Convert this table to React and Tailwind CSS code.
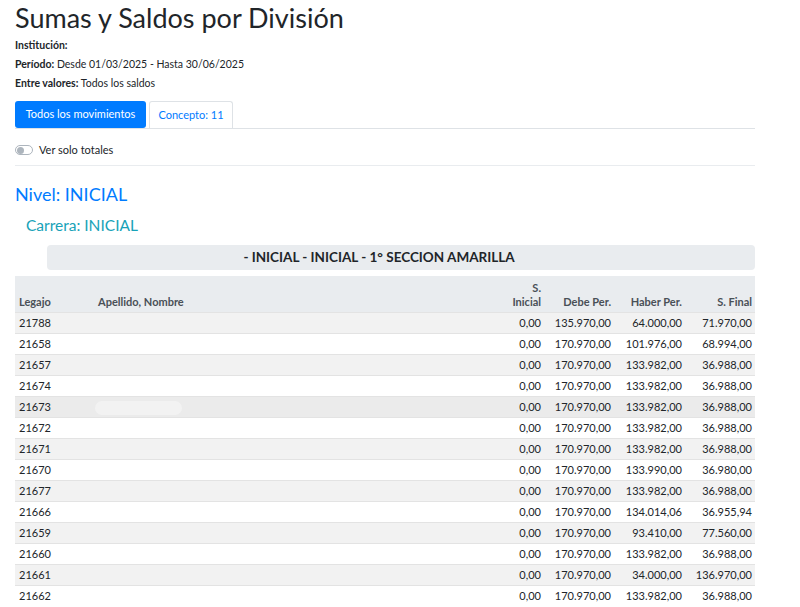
import React from "react";

const rows = [
  ["21788", "0,00", "135.970,00", "64.000,00", "71.970,00"],
  ["21658", "0,00", "170.970,00", "101.976,00", "68.994,00"],
  ["21657", "0,00", "170.970,00", "133.982,00", "36.988,00"],
  ["21674", "0,00", "170.970,00", "133.982,00", "36.988,00"],
  ["21673", "0,00", "170.970,00", "133.982,00", "36.988,00"],
  ["21672", "0,00", "170.970,00", "133.982,00", "36.988,00"],
  ["21671", "0,00", "170.970,00", "133.982,00", "36.988,00"],
  ["21670", "0,00", "170.970,00", "133.990,00", "36.980,00"],
  ["21677", "0,00", "170.970,00", "133.982,00", "36.988,00"],
  ["21666", "0,00", "170.970,00", "134.014,06", "36.955,94"],
  ["21659", "0,00", "170.970,00", "93.410,00", "77.560,00"],
  ["21660", "0,00", "170.970,00", "133.982,00", "36.988,00"],
  ["21661", "0,00", "170.970,00", "34.000,00", "136.970,00"],
  ["21662", "0,00", "170.970,00", "133.982,00", "36.988,00"],
];

const cols = "grid grid-cols-[79px_1fr_46px_70px_71px_69px]";

export default function App() {
  return (
    <div
      className="w-[800px] h-[607px] overflow-hidden bg-white text-[#212529]"
      style={{ fontFamily: 'Lato, "Open Sans", sans-serif' }}
    >
      <div className="ml-[15px] w-[740px]">
        <h1 className="text-[27px] leading-[36px] font-normal">Sumas y Saldos por División</h1>
        <div className="text-[10.5px] leading-[19px]">
          <div><span className="font-bold">Institución:</span></div>
          <div><span className="font-bold">Período:</span> Desde 01/03/2025 - Hasta 30/06/2025</div>
          <div><span className="font-bold">Entre valores:</span> Todos los saldos</div>
        </div>
        <div className="mt-[8px] flex gap-[3px] border-b border-[#dee2e6] text-[11px]">
          <div className="h-[27px] w-[131px] flex items-center justify-center rounded-[3px] bg-[#007bff] text-white">
            Todos los movimientos
          </div>
          <div className="h-[27px] w-[84px] flex items-center justify-center rounded-t-[3px] border border-b-0 border-[#dee2e6] text-[#007bff]">
            Concepto: 11
          </div>
        </div>
        <div className="h-[37px] pt-[14px] flex items-start gap-[6px] border-b border-[#e9ecef] text-[11px] leading-[14px]">
          <div className="mt-[2px] w-[18px] h-[10px] rounded-full border border-[#adb5bd] bg-white flex items-center px-[1px]">
            <div className="w-[7px] h-[7px] rounded-full bg-[#adb5bd]" />
          </div>
          <span>Ver solo totales</span>
        </div>
        <div className="mt-[16px] text-[18px] leading-[24px] text-[#007bff]">Nivel: INICIAL</div>
        <div className="mt-[7px] ml-[11px] text-[15.5px] leading-[24px] text-[#17a2b8]">Carrera: INICIAL</div>
        <div className="mt-[8px] ml-[32px] h-[25px] rounded-[4px] bg-[#e9ecef] flex items-center justify-center pr-[44px] text-[13.5px] font-bold">
          - INICIAL - INICIAL - 1° SECCION AMARILLA
        </div>
        <div className="mt-[6px] text-[11px]">
          <div className={`${cols} h-[36px] bg-[#e9ecef] font-bold text-[#495057] items-end pb-[3px] leading-[14px]`}>
            <div className="pl-[4px]">Legajo</div>
            <div className="pl-[4px]">Apellido, Nombre</div>
            <div className="pr-[4px] text-right">S.<br />Inicial</div>
            <div className="pr-[4px] text-right">Debe Per.</div>
            <div className="pr-[4px] text-right">Haber Per.</div>
            <div className="pr-[3px] text-right">S. Final</div>
          </div>
          {rows.map((r, i) => (
            <div
              key={r[0]}
              className={`${cols} h-[21px] pt-[1px] items-center border-t border-[#e3e3e3] ${
                i === 4 ? "bg-[#ebebeb]" : i % 2 === 0 ? "bg-[#f2f2f2]" : "bg-white"
              }`}
            >
              <div className="pl-[4px]">{r[0]}</div>
              <div className="pl-[4px]">
                {i === 4 && <div className="ml-[-3px] w-[87px] h-[14px] rounded-full bg-[#f2f2f2]" />}
              </div>
              <div className="pr-[4px] text-right">{r[1]}</div>
              <div className="pr-[4px] text-right">{r[2]}</div>
              <div className="pr-[4px] text-right">{r[3]}</div>
              <div className="pr-[3px] text-right">{r[4]}</div>
            </div>
          ))}
        </div>
      </div>
    </div>
  );
}
